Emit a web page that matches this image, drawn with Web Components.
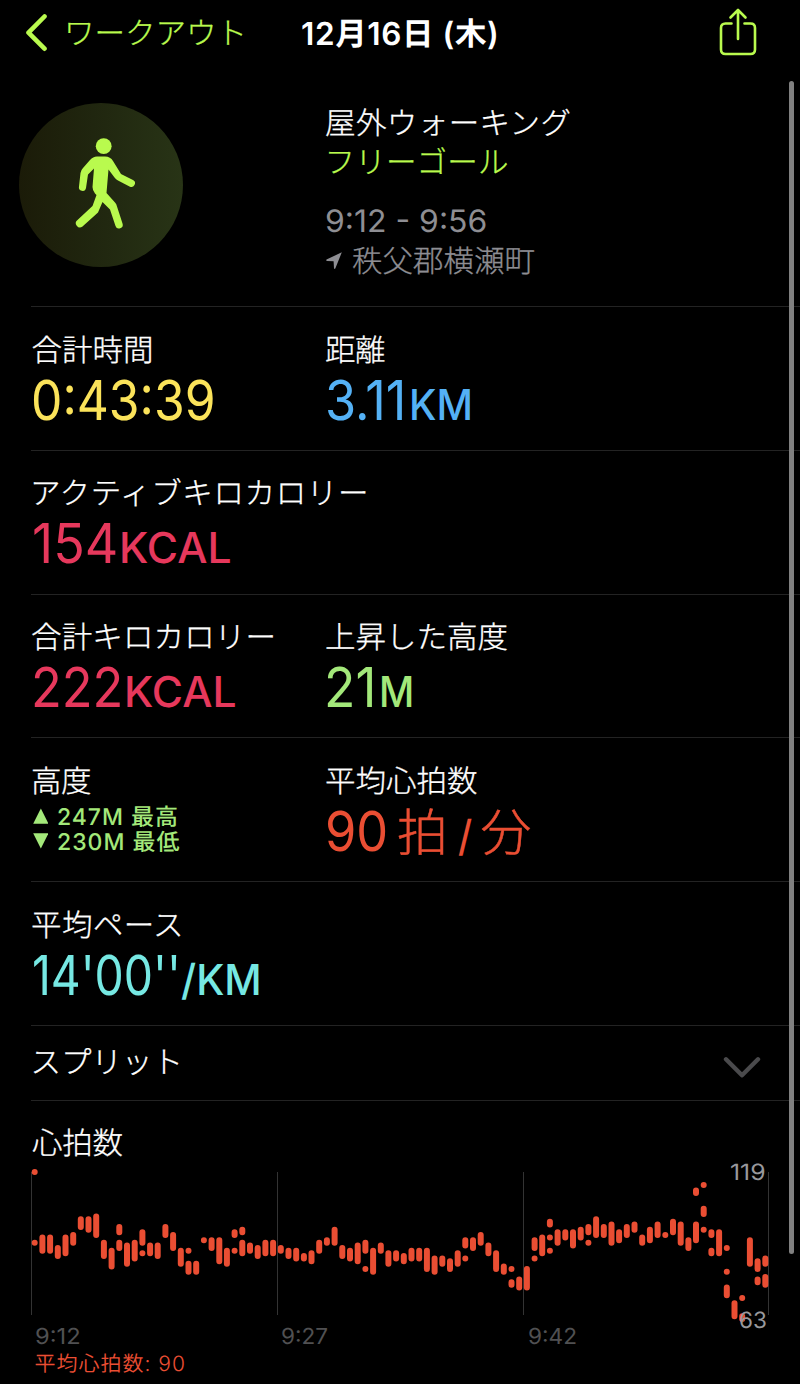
<!DOCTYPE html>
<html lang="ja">
<head>
<meta charset="utf-8">
<title>ワークアウト</title>
<style>
html{background:#000}
body{margin:0;background:#000;color:#fff;font-family:Inter,"Noto Sans CJK JP",sans-serif}
</style>
</head>
<body>
<workout-page></workout-page>
<script>
const FONT = 'Inter,"Noto Sans CJK JP",sans-serif';
const ctx = document.createElement('canvas').getContext('2d');

// A single line of text whose box is exactly its inked width.
// Attributes: w = inked width, size = font size, wt = weight, lh = line height.
// Latin text is condensed to the width; Japanese text is tracked to it.
class FitText extends HTMLElement {
  connectedCallback() {
    const text = this.getAttribute('text');
    const w = +this.getAttribute('w'), size = this.getAttribute('size') || 30.5;
    const wt = this.getAttribute('wt') || 300, lh = this.getAttribute('lh') || 32;
    ctx.font = `${wt} ${size}px ${FONT}`;
    ctx.textRendering = 'geometricPrecision';
    const m = ctx.measureText(text);
    const ink = m.actualBoundingBoxRight + m.actualBoundingBoxLeft;
    const n = [...text].length;
    const latin = /^[\x20-\x7e]+$/.test(text);
    const scale = latin ? w / ink : 1;
    const ls = !latin && n > 1 ? (w - ink) / (n - 1) : 0;
    const root = this.attachShadow({mode: 'open'});
    root.innerHTML = `<style>
      :host{display:block;flex:none;width:${w}px;height:${lh}px;line-height:${+lh + 2}px;white-space:nowrap;
        font-family:${FONT};font-size:${size}px;font-weight:${wt};text-rendering:geometricPrecision;
        -webkit-text-stroke:${wt == 300 ? size / 100 : 0}px currentColor}
      span{display:block;margin-left:${(m.actualBoundingBoxLeft * scale).toFixed(2)}px;letter-spacing:${ls.toFixed(3)}px;
        transform-origin:0 0;${latin ? `transform:scaleX(${scale.toFixed(4)})` : ''}}
    </style><span></span>`;
    root.querySelector('span').textContent = text;
  }
}
customElements.define('fit-text', FitText);

const define = (name, html) => {
  const t = document.createElement('template');
  t.innerHTML = html;
  customElements.define(name, class extends HTMLElement {
    constructor() {
      super();
      this.attachShadow({mode: 'open'}).append(t.content.cloneNode(true));
    }
  });
};

define('nav-bar', `<style>
  :host{display:grid;grid-template-columns:302px 1fr auto;height:66px;align-items:center;color:#b9fa4e}
  .back{display:flex;align-items:center;padding-left:25px;gap:20px}
  svg{display:block;fill:none;stroke:currentColor;stroke-linecap:round;stroke-linejoin:round}
  .title{color:#fff}
  .share{margin:-2px 43px 0 0}
</style>
<div class="back">
  <svg width="23" height="38" viewBox="0 0 23 38" stroke-width="4.6"><path d="M19.5 2.5 3.5 18.700l16 16"/></svg>
  <fit-text text="ワークアウト" w="174.500"></fit-text>
</div>
<fit-text class="title" text="12月16日 (木)" w="194" size="31.500" wt="600"></fit-text>
<svg class="share" width="38" height="48" viewBox="0 0 38 48" stroke-width="2.600"><path d="M12.500 15.500H6.500Q2 15.500 2 20V41.500Q2 46 6.500 46H31.500Q36 46 36 41.500V20Q36 15.500 31.500 15.500H25.500M19 31V2M11.500 9.500 19 2l7.500 7.500"/></svg>`);

define('workout-summary', `<style>
  :host{display:grid;grid-template-columns:307px 1fr;height:240px}
  .disc{width:164px;height:164px;margin:36.500px 0 0 19px;border-radius:50%;background:linear-gradient(90deg,#1b1b08,#20260f 45%,#283416)}
  .disc svg{display:block}
  .info{padding:40.500px 0 0 19px;display:flex;flex-direction:column}
  .goal{color:#b9fa4e;margin:7.500px 0 0 2.500px}
  .time{color:#8e8e93;margin:26.500px 0 0 .5px}
  .place{color:#8e8e93;display:flex;align-items:center;gap:11px;margin-top:8px}
</style>
<div class="disc"><svg width="164" height="164" viewBox="19 103 164 164" fill="#b9fa4e">
  <circle cx="103.700" cy="146.200" r="7.900"/>
  <path d="M97 156.500q-4 0-7 3.500L83 168Q81 170 80.500 173L79 186.500a3.500 3.500 0 0 0 7 1.500L88 174.500 94 168.500 92.500 187q0 3.500 2.500 6.500L96.500 195 92.500 206 77.500 220a3.800 3.800 0 0 0 5 6.500L98 212.500 102.500 202 110 209.500 115.500 226a3.700 3.700 0 0 0 7-2.500L117 206.500Q116.500 204 115 202.500L106.500 193 108.500 169.500 114.500 177.500Q116 179.500 118 180.500L129.500 186.500a3.600 3.600 0 0 0 3.500-6.500L121 174 113 161Q110.500 156.500 105 156.500Z"/>
</svg></div>
<div class="info">
  <fit-text text="屋外ウォーキング" w="243.500"></fit-text>
  <fit-text class="goal" text="フリーゴール" w="178.500"></fit-text>
  <fit-text class="time" text="9:12 - 9:56" w="160" size="31" wt="400"></fit-text>
  <div class="place"><svg width="16" height="18" viewBox="0 0 16 18"><path d="M15.800 .3 .5 7.500Q-.2 8.600 1 8.900L7.600 9.300 8 16.300Q8.400 17.700 9.300 16.600Z" fill="#8e8e93"/></svg><fit-text text="秩父郡横瀬町" w="181.500"></fit-text></div>
</div>`);

define('stat-row', `<style>
  :host{display:grid;grid-template-columns:294px 1fr;box-sizing:border-box;height:143.750px;margin-left:31px;border-top:1px solid #232323;padding-top:26.500px}
</style><slot></slot>`);

define('stat-cell', `<style>
  :host{display:block;padding-left:1px}
  .value{display:flex;align-items:baseline;margin-top:1px}
</style><slot name="label"></slot><div class="value"><slot></slot></div>`);

define('altitude-range', `<style>
  :host{display:flex;flex-direction:column;color:#a3e87a;margin:6px 0 0 .8px}
  div{display:flex;align-items:center;gap:9.500px;height:25px}
  svg{fill:currentColor}
</style>
<div><svg width="15.700" height="16"><path d="M7.850.5 15.500 15.700H.2Z"/></svg><fit-text text="247M 最高" w="119" size="23" wt="500" lh="25"></fit-text></div>
<div><svg width="15.700" height="16"><path d="M7.850 15.500 15.500.3H.2Z"/></svg><fit-text text="230M 最低" w="121.500" size="23" wt="500" lh="25"></fit-text></div>`);

define('splits-row', `<style>
  :host{display:flex;justify-content:space-between;box-sizing:border-box;height:75.500px;margin-left:31px;border-top:1px solid #232323;padding:20px 39px 0 2.500px}
  svg{margin-top:10px}
</style>
<fit-text text="スプリット" w="145"></fit-text>
<svg width="38" height="24" viewBox="0 0 38 24" fill="none" stroke="#4a4a4c" stroke-width="4.400" stroke-linecap="round" stroke-linejoin="round"><path d="M3 3.300 19 19.300 35 3.300"/></svg>`);

// Ranges of beats per minute below 119: columns split by a space, separate ranges by "/".
const BEATS = '0/27 25-30 25-30 29-32 25-31 24-27 18-21 18-22 17-24 27-32 30-36 21-23/27-29 28-35 27-33 23-27/31 28-31 28-32 21-24 24-29 30-35 30/35-38 35-38 26 26-29 26-34 30-35 23-24/30 22-23/27-31 28-30 29-32 27-31 27-31 29-30 30-32 30-33 32-33 31-34 27-30 26-27 22-27 29-32 30-33 28-34 27-30/37 30-38 28-30 31-35 31-33 32-34 30-33 30-33 30-37 33-38 33-35 34-37 31-35 26-28/33 26-29 24-27 28-31 31-37 36-38 37/42-43 41-44 37-44 26-29/33 25-31 19-20/25/30 23-27 23-25 23-28 22-25 21-23/27 18-24 21-24 20-27 23-26 21-24 20-22 25-27 22-26 20-24 24 19-23 20-27 26-29 7-8/20-26 5/14-16/22 23-24/30-31 23-31 29/38/44-47 50-55 48/55-56 26-35 34-37/41-42 33-35/40-43';

class HeartChart extends HTMLElement {
  connectedCallback() {
    const bars = BEATS.split(' ').map((col, i) => col.split('/').map(r => {
      const [a, b = a] = r.split('-').map(Number);
      const x = 4.7 + i * 7.69, y = n => (n * 2.623 + 5).toFixed(1);
      return `M${x.toFixed(1)} ${y(a)}V${(+y(b) + .01).toFixed(2)}`;
    }).join('')).join('');
    this.attachShadow({mode: 'open'}).innerHTML = `<style>
      :host{display:block;margin-left:30px;width:742px;position:relative}
      svg{display:block}
      .max,.min{position:absolute;color:#98989c}
      .max{top:-9px;left:701.500px}
      .min{top:139px;left:709.500px}
      .times{display:grid;grid-template-columns:246px 246.500px 1fr;padding-left:6.500px;color:#505052;margin-top:-.5px}
      .avg{color:#ea4e33;margin:0 0 0 5.500px}
    </style>
    <svg width="742" height="156"><path d="M1.500 5V148M247.500 5V148M493.500 5V148M738.500 5V148" stroke="#333" stroke-width="1"/>
    <path d="${bars}" stroke="#ea4e33" stroke-width="6" stroke-linecap="round"/></svg>
    <fit-text class="max" text="119" w="33.500" size="22.500" wt="400" lh="28"></fit-text>
    <fit-text class="min" text="63" w="26" size="22.500" wt="400" lh="28"></fit-text>
    <div class="times">
      <fit-text text="9:12" w="43" size="22" wt="400" lh="28"></fit-text>
      <fit-text text="9:27" w="45.500" size="22" wt="400" lh="28"></fit-text>
      <fit-text text="9:42" w="46.500" size="22" wt="400" lh="28"></fit-text>
    </div>
    <fit-text class="avg" text="平均心拍数: 90" w="148.500" size="21" wt="350" lh="27"></fit-text>`;
  }
}
customElements.define('heart-chart', HeartChart);

define('scroll-thumb', `<style>:host{display:block;position:absolute;left:788.500px;top:81px;width:5.500px;height:1173px;border-radius:3px;background:#808080}</style>`);

define('workout-page', `<style>
  :host{display:block;position:relative;width:800px;height:1384px;overflow:hidden;background:#000}
  .yellow{color:#fbe35a}.blue{color:#54b1f5}.pink{color:#e6385c}.green{color:#a3e87a}.red{color:#ea4e33}.cyan{color:#76e8e3}
  .line{margin-left:31px;border-top:1px solid #232323;padding:25.500px 0 0 1px}
  heart-chart{margin-top:8px}
</style>
<nav-bar></nav-bar>
<workout-summary></workout-summary>
<stat-row>
  <stat-cell><fit-text slot="label" text="合計時間" w="118.500" style="margin-left:.5px"></fit-text><fit-text class="yellow" text="0:43:39" w="179" size="55" wt="400" lh="66" style="margin-left:2px"></fit-text></stat-cell>
  <stat-cell><fit-text slot="label" text="距離" w="59"></fit-text><fit-text class="blue" text="3.11" w="74.500" size="55" wt="400" lh="66" style="margin-left:2px"></fit-text><fit-text class="blue" text="KM" w="58.500" size="42.500" wt="480" lh="66" style="margin-left:9px"></fit-text></stat-cell>
</stat-row>
<stat-row>
  <stat-cell><fit-text slot="label" text="アクティブキロカロリー" w="332" style="margin-left:2px"></fit-text><fit-text class="pink" text="154" w="82" size="55" wt="400" lh="66" style="margin-left:2px"></fit-text><fit-text class="pink" text="KCAL" w="108.500" size="42.500" wt="480" lh="66" style="margin-left:6px"></fit-text></stat-cell>
</stat-row>
<stat-row>
  <stat-cell><fit-text slot="label" text="合計キロカロリー" w="241.500"></fit-text><fit-text class="pink" text="222" w="85.500" size="55" wt="400" lh="66" style="margin-left:2.500px"></fit-text><fit-text class="pink" text="KCAL" w="108.500" size="42.500" wt="480" lh="66" style="margin-left:6.500px"></fit-text></stat-cell>
  <stat-cell><fit-text slot="label" text="上昇した高度" w="181.500"></fit-text><fit-text class="green" text="21" w="44.500" size="55" wt="400" lh="66" style="margin-left:2px"></fit-text><fit-text class="green" text="M" w="30" size="42.500" wt="480" lh="66" style="margin-left:9px"></fit-text></stat-cell>
</stat-row>
<stat-row>
  <stat-cell><fit-text slot="label" text="高度" w="58" style="margin-left:1px"></fit-text><altitude-range></altitude-range></stat-cell>
  <stat-cell><fit-text slot="label" text="平均心拍数" w="151"></fit-text><fit-text class="red" text="90" w="58" size="55" wt="400" lh="66" style="margin-left:2px"></fit-text><fit-text class="red" text="拍" w="46.500" size="51" lh="66" style="margin-left:12px"></fit-text><fit-text class="red" text="/" w="13.500" size="42.500" wt="480" lh="66" style="margin-left:13px"></fit-text><fit-text class="red" text="分" w="50" size="51" lh="66" style="margin-left:10.500px"></fit-text></stat-cell>
</stat-row>
<stat-row>
  <stat-cell><fit-text slot="label" text="平均ペース" w="149"></fit-text><fit-text class="cyan" text="14'00''" w="142.500" size="55" wt="400" lh="66" style="margin-left:1.500px"></fit-text><fit-text class="cyan" text="/KM" w="78" size="42.500" wt="480" lh="66" style="margin-left:4.500px"></fit-text></stat-cell>
</stat-row>
<splits-row></splits-row>
<div class="line"><fit-text text="心拍数" w="90.500"></fit-text></div>
<heart-chart></heart-chart>
<scroll-thumb></scroll-thumb>`);
</script>
</body>
</html>
